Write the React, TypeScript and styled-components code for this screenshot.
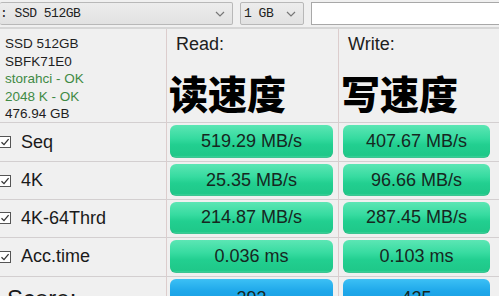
import styled, { createGlobalStyle } from "styled-components";

const GlobalStyle = createGlobalStyle`
    html, body {
        margin: 0;
        padding: 0;
        background: #f0f0f0;
        overflow: hidden;
    }
    body {
        font-family: "Liberation Sans", Arial, "Noto Sans CJK SC", sans-serif;
        color: #1e1e1e;
    }
`;

type Result = { label: string; read: string; write: string };

const results: Result[] = [
    { label: "Seq", read: "519.29 MB/s", write: "407.67 MB/s" },
    { label: "4K", read: "25.35 MB/s", write: "96.66 MB/s" },
    { label: "4K-64Thrd", read: "214.87 MB/s", write: "287.45 MB/s" },
    { label: "Acc.time", read: "0.036 ms", write: "0.103 ms" },
];

const CheckIcon = () => (
    <svg width="12" height="12" viewBox="0 0 12 12">
        <rect x="0.5" y="0.5" width="11" height="11" fill="#fff" stroke="#555" />
        <path d="M2.5 6.2 L5 8.6 L9.6 3.2" fill="none" stroke="#333" strokeWidth="1.3" />
    </svg>
);

const Chevron = () => (
    <svg width="10" height="6" viewBox="0 0 10 6">
        <path d="M1 1 L5 5 L9 1" fill="none" stroke="#777" strokeWidth="1.2" />
    </svg>
);

const App = () => {
    return (
        <Window>
            <GlobalStyle />
            <Toolbar>
                <Combo width={233}>
                    <ComboText>: SSD 512GB</ComboText>
                    <Chevron />
                </Combo>
                <Combo width={64}>
                    <ComboText>1 GB</ComboText>
                    <Chevron />
                </Combo>
                <Field />
            </Toolbar>
            <Grid>
                <InfoCell>
                    <InfoLine>SSD 512GB</InfoLine>
                    <InfoLine>SBFK71E0</InfoLine>
                    <InfoLine ok>storahci - OK</InfoLine>
                    <InfoLine ok>2048 K - OK</InfoLine>
                    <InfoLine>476.94 GB</InfoLine>
                </InfoCell>
                <HeadCell>
                    <HeadLabel>Read:</HeadLabel>
                    <HeadBig>读速度</HeadBig>
                </HeadCell>
                <HeadCell last>
                    <HeadLabel>Write:</HeadLabel>
                    <HeadBig>写速度</HeadBig>
                </HeadCell>
                {results.map((r) => (
                    <Row key={r.label}>
                        <LabelCell>
                            <CheckIcon />
                            <span>{r.label}</span>
                        </LabelCell>
                        <BarCell>
                            <Bar>{r.read}</Bar>
                        </BarCell>
                        <BarCell last>
                            <Bar>{r.write}</Bar>
                        </BarCell>
                    </Row>
                ))}
                <LabelCell score>Score:</LabelCell>
                <BarCell>
                    <Bar blue>293</Bar>
                </BarCell>
                <BarCell last>
                    <Bar blue>425</Bar>
                </BarCell>
            </Grid>
        </Window>
    );
};

const Window = styled.div`
    width: 499px;
    height: 296px;
    overflow: hidden;
    background: #f0f0f0;
`;

const Toolbar = styled.div`
    display: flex;
    align-items: center;
    gap: 7px;
    height: 29px;
    border-bottom: 2px solid #d6d6d6;
    box-sizing: border-box;
`;

const Combo = styled.div<{ width: number }>`
    width: ${(p) => p.width}px;
    height: 23px;
    box-sizing: border-box;
    display: flex;
    align-items: center;
    justify-content: space-between;
    padding: 0 7px 0 3px;
    background: linear-gradient(#ececec, #e2e2e2);
    border: 1px solid #b8b8b8;
    border-radius: 2px;
    &:first-child {
        border-left: none;
        padding-left: 0;
    }
`;

const ComboText = styled.span`
    font-family: "Liberation Mono", "Noto Sans CJK SC", monospace;
    font-size: 13px;
    color: #222;
    letter-spacing: -0.5px;
`;

const Field = styled.div`
    flex: 1;
    height: 23px;
    background: #fff;
    border: 1px solid #a8a8a8;
    border-right: none;
    box-sizing: border-box;
`;

const Grid = styled.div`
    display: grid;
    grid-template-columns: 167px 172px 1fr;
    grid-template-rows: 94px 39px 38px 37.5px 39.5px 30px;
`;

const Row = styled.div`
    display: contents;
`;

const Cell = styled.div<{ last?: boolean }>`
    box-sizing: border-box;
    border-bottom: 1px solid #d3cfd0;
    border-right: ${(p) => (p.last ? "none" : "1px solid #dccdcd")};
`;

const InfoCell = styled(Cell)`
    padding: 6px 0 0 5px;
    display: flex;
    flex-direction: column;
`;

const InfoLine = styled.div<{ ok?: boolean }>`
    font-size: 13.5px;
    line-height: 17.5px;
    color: ${(p) => (p.ok ? "#3f8a45" : "#1e1e1e")};
`;

const HeadCell = styled(Cell)`
    padding: 5px 0 0 9px;
    display: flex;
    flex-direction: column;
`;

const HeadLabel = styled.div`
    font-size: 18px;
    line-height: 20px;
    color: #202020;
`;

const HeadBig = styled.div`
    font-family: "Noto Sans CJK SC", sans-serif;
    font-weight: 900;
    font-size: 39px;
    line-height: 44px;
    margin-top: 16px;
    margin-left: -7px;
    color: #000;
`;

const LabelCell = styled(Cell)<{ score?: boolean }>`
    display: flex;
    align-items: ${(p) => (p.score ? "flex-start" : "center")};
    gap: 10px;
    padding-left: ${(p) => (p.score ? "7px" : "0")};
    padding-top: ${(p) => (p.score ? "8px" : "0")};
    font-size: ${(p) => (p.score ? "24px" : "18px")};
    color: #1a1a1a;
    svg {
        margin-left: -1px;
    }
`;

const BarCell = styled(Cell)`
    padding: 2px ${(p) => (p.last ? "9px" : "5px")} 3px ${(p) => (p.last ? "4px" : "3px")};
    display: flex;
`;

const Bar = styled.div<{ blue?: boolean }>`
    flex: 1;
    display: flex;
    justify-content: center;
    border-radius: 6px;
    font-size: 18px;
    color: #16271f;
    background: ${(p) =>
        p.blue
            ? "linear-gradient(#3cc0f5, #1fa8ea 50%, #1b9ee2)"
            : "linear-gradient(#5ce6b4 0%, #36dba0 40%, #22cf90 60%, #1fc889 92%, #4ad9a3 100%)"};
    box-shadow: inset 0 -1px 0 rgba(0, 0, 0, 0.08);
    padding-top: ${(p) => (p.blue ? "9px" : "0")};
    align-items: ${(p) => (p.blue ? "flex-start" : "center")};
`;

export default App;
